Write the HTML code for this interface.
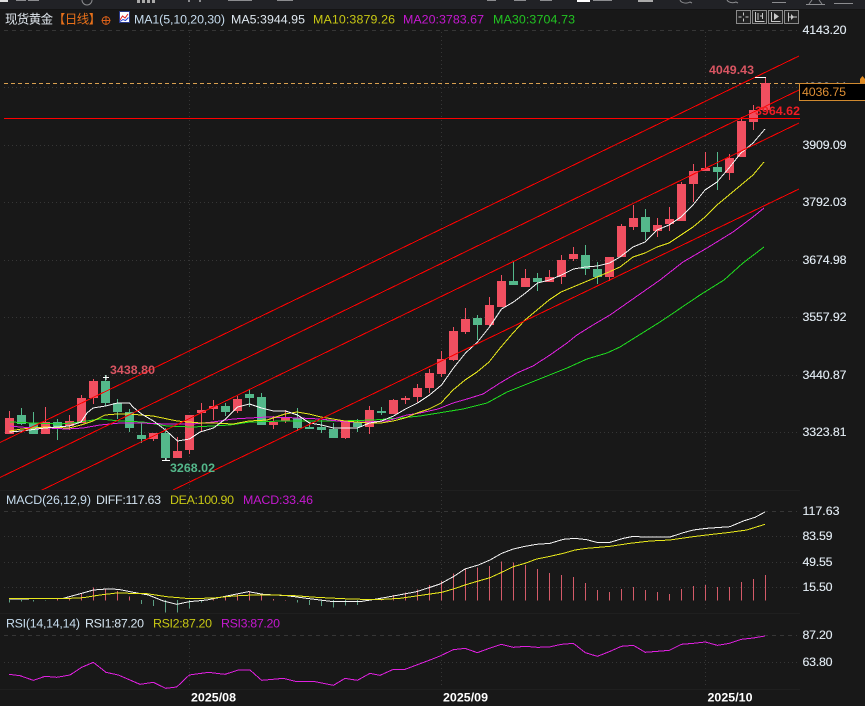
<!DOCTYPE html>
<html lang="zh">
<head>
<meta charset="utf-8">
<title>现货黄金</title>
<style>
html,body{margin:0;padding:0;background:#181818;overflow:hidden}
svg{display:block;position:absolute;left:0;top:0}
text{font-family:"Liberation Sans","Noto Sans CJK SC",sans-serif;font-size:12.4px;white-space:pre}
.l{fill:#e4edf5;stroke:#e4edf5;stroke-width:.12}
.b{font-weight:700;fill:#fff}
</style>
</head>
<body>
<svg width="865" height="706" viewBox="0 0 865 706" xmlns="http://www.w3.org/2000/svg">
<defs><clipPath id="c"><rect x="0" y="0" width="800" height="490"/></clipPath><clipPath id="t"><rect x="800" y="70" width="65" height="13"/></clipPath></defs>
<rect width="865" height="706" fill="#181818"/>
<!-- top band -->
<rect width="865" height="9" fill="#212226"/>
<rect y="9" width="865" height="1" fill="#141414"/>
<g fill="#8b8c8f">
<rect x="0" y="0" width="8" height="2" fill="#ddd"/><rect x="16" y="0" width="10" height="1"/><rect x="28" y="0" width="11" height="1"/>
<rect x="137" y="0" width="3" height="3" fill="#aaa"/><rect x="142" y="0" width="3" height="3" fill="#aaa"/><rect x="147" y="0" width="3" height="3" fill="#aaa"/><rect x="152" y="0" width="3" height="3" fill="#aaa"/>
<rect x="188" y="0" width="2" height="2"/><rect x="199" y="0" width="2" height="2"/>
<rect x="228" y="0" width="24" height="1"/><rect x="277" y="0" width="16" height="1"/>
<rect x="487" y="0" width="9" height="1"/><rect x="514" y="0" width="12" height="1"/><rect x="540" y="0" width="12" height="1"/>
<rect x="577" y="0" width="13" height="2" fill="#fff"/><rect x="593" y="0" width="19" height="1"/>
<rect x="638" y="0" width="15" height="2" fill="#aaa"/>
<rect x="772" y="2" width="14" height="1"/><rect x="834" y="3" width="19" height="1"/>
</g>
<g fill="none" stroke="#8b8c8f"><path d="M82 0a5 5 0 0 0 10 0"/><path d="M680 0a6 4 0 0 0 10 2l2 1"/><path d="M727 0a6 4 0 0 0 9 2l2 1"/><path d="M806 4.500h19M809 4 812 0M822 4 819 0"/></g>

<!-- grid -->
<g fill="none" stroke="#363636" stroke-width="1">
<path stroke-dasharray="4 4" d="M4 30.500H797M4 511.500H797M4 635.500H797"/>
<path stroke-dasharray="1 3" d="M4 87.500H797M4 145.500H797M4 202.500H797M4 260.500H797M4 317.500H797M4 375.500H797M4 432.500H797M4 536.500H797M4 562.500H797M4 587.500H797M4 662.500H797"/>
<path stroke-dasharray="1 3" d="M189.500 32V612M441.500 32V612M705.500 32V612M189.500 640V688M441.500 640V688M705.500 640V688"/>
</g>
<path d="M0 613.500H800M0 689.500H800M0 490.500H800" stroke="#1f1f1f" fill="none"/>
<path d="M4 83.500H800" stroke="#d9a050" stroke-dasharray="4 3" fill="none"/>

<!-- candles -->
<g shape-rendering="crispEdges">
<path fill="none" stroke="#f04f60" d="M9.500 411V434M45.500 407V434M69.500 415V430M81.500 395V423M93.500 379V404M153.500 433V441M177.500 437V458M189.500 415V454M201.500 403V432M213.500 400V420M237.500 396V413M273.500 416V429M285.500 410V423M345.500 422V439M369.500 406V434M393.500 399V414M405.500 396V404M417.500 384V402M429.500 369V393M441.500 351V377M453.500 327V361M465.500 308V334M489.500 297V326M501.500 275V307M525.500 269V287M549.500 270V282M561.500 255V284M573.500 247V261M609.500 257V281M621.500 224V257M633.500 205V230M657.500 218V237M669.500 207V231M681.500 182V221M693.500 164V202M705.500 152V171M729.500 154V180M741.500 117V157M753.500 105V130M765.500 77V110"/>
<path fill="#f04f60" d="M5 418h9V434h-9zM41 422h9V434h-9zM65 421h9V426h-9zM77 398h9V423h-9zM89 381h9V398h-9zM149 433h9V439h-9zM173 451h9V458h-9zM185 415h9V450h-9zM197 410h9V413h-9zM209 406h9V409h-9zM233 399h9V411h-9zM269 422h9V425h-9zM281 418h9V421h-9zM341 422h9V438h-9zM365 410h9V427h-9zM389 400h9V414h-9zM401 398h9V400h-9zM413 388h9V397h-9zM425 373h9V388h-9zM437 359h9V374h-9zM449 331h9V360h-9zM461 319h9V332h-9zM485 305h9V325h-9zM497 281h9V307h-9zM521 278h9V287h-9zM545 277h9V282h-9zM557 260h9V277h-9zM569 254h9V259h-9zM605 257h9V277h-9zM617 226h9V257h-9zM629 218h9V227h-9zM653 225h9V231h-9zM665 219h9V224h-9zM677 184h9V221h-9zM689 171h9V184h-9zM701 168h9V171h-9zM725 158h9V173h-9zM737 121h9V157h-9zM749 110h9V122h-9zM761 83h9V110h-9z"/>
<path fill="none" stroke="#54b88b" d="M21.500 408V425M33.500 412V434M57.500 419V440M105.500 375V406M117.500 399V419M129.500 409V432M141.500 423V443M165.500 428V460M225.500 403V416M249.500 390V407M261.500 393V425M297.500 408V431M309.500 423V429M321.500 420V433M333.500 423V438M357.500 419V432M381.500 407V415M477.500 315V340M513.500 262V285M537.500 273V291M585.500 245V275M597.500 262V284M645.500 209V240M717.500 152V190"/>
<path fill="#54b88b" d="M17 415h9V424h-9zM29 423h9V434h-9zM53 422h9V427h-9zM101 381h9V403h-9zM113 403h9V412h-9zM125 412h9V428h-9zM137 435h9V439h-9zM161 433h9V458h-9zM221 406h9V412h-9zM245 394h9V398h-9zM257 397h9V425h-9zM293 418h9V428h-9zM305 427h9V429h-9zM317 427h9V430h-9zM329 429h9V438h-9zM353 422h9V427h-9zM377 411h9V413h-9zM473 318h9V325h-9zM509 281h9V285h-9zM533 278h9V282h-9zM581 255h9V269h-9zM593 269h9V277h-9zM641 217h9V232h-9zM713 167h9V172h-9z"/>
</g>

<!-- moving averages -->
<g fill="none" stroke-width="1" shape-rendering="crispEdges">
<polyline stroke="#1fdc1f" points="10,422 33,423 60,424 80,422 100,419 120,421 143,422 167,426 193,427 230,425 250,422 283,421 313,421 340,421 373,420 400,418 420,416 463,409 487,403 507,392 527,384 547,376 567,368 587,359 607,353 620,347 660,322 700,295 724,280 743,263 764,247"/>
<polyline stroke="#e020e0" points="10,426 20,427 33,428 47,428 67,429 83,428 100,425 120,423 140,423 167,424 193,424 213,422 233,419 267,417 300,418 320,419 347,422 367,422 387,421 407,415 420,413 438,409 453,403 467,399 483,394 500,383 517,373 533,366 550,355 567,343 577,335 593,325 610,315 620,308 660,280 683,262 707,248 733,232 753,217 764,208"/>
<polyline stroke="#e8e81c" points="9.500,431 21.500,429 45,427 69,428 81,425 93,421 105,415 117,414 129,414 153,416 177,421 201,423 213,423 233,424 249,421 267,420 285,414 297,412 309,414 321,417 333,419 345,421 357,422 369,423 381,423 393,421 405,418 417,413 429,409 441,403 453,390 465,380 477,372 489,362 501,347 513,333 525,320 537,310 549,300 561,292 573,287 585,282 597,277 609,272 620,267 633,257 645,253 657,247 669,243 681,235 693,227 705,217 717,205 729,195 741,185 753,175 764,162"/>
<polyline stroke="#f4f4f4" points="9.500,432 21.500,431 45,428 57,427 69,426 81,422 87,413 93,408 105.500,406 117.500,403 129.500,403 133,407 141.500,414 153.500,421 165.500,430 177.500,441 189.500,439 200,432 213.500,428 225.500,419 237.500,407 249.500,404 261.500,408 273.500,411 285.500,411 297.500,415 309.500,423 321.500,425 333.500,428 345.500,428 357.500,428 369.500,423 381.500,421 393.500,416 405.500,409 417.500,403 429.500,395 441.500,385 453.500,368 465.500,353 477.500,342 489.500,327 501.500,309 513.500,302 525.500,293 537.500,283 549.500,280 561.500,275 573.500,269 585.500,267 597.500,266 609.500,263 620,257 633,247 645,242 657,230 669,225 681,217 693,205 705,190 717,182 729,168 741,153 753,143 765,129"/>
</g>

<!-- channels -->
<g clip-path="url(#c)" fill="none" stroke="#ff0000" stroke-width="1" shape-rendering="crispEdges">
<path d="M0 442.500L799 56M0 477.500L799 90M40 491L799 123M173 490L799 189"/>
<path d="M4 118.500H800"/>
</g>

<!-- extreme marks -->
<path d="M103 377.500h6M106 375v5M162 460.500h8M166 458v3M755 77.500h11" stroke="#fff" fill="none" shape-rendering="crispEdges"/>
<text x="110" y="374" textLength="45" fill="#d95562" font-weight="700" lengthAdjust="spacing">3438.80</text>
<text x="170" y="472" textLength="45" fill="#54b88b" font-weight="700" lengthAdjust="spacing">3268.02</text>
<text x="709" y="74" textLength="45" fill="#d95562" font-weight="700" lengthAdjust="spacing">4049.43</text>
<text x="755" y="115" textLength="45" fill="#f01c24" font-weight="700" lengthAdjust="spacing">3964.62</text>

<!-- header -->
<text x="5" y="23.500" fill="#dfe6ec" textLength="48" lengthAdjust="spacing">现货黄金</text>
<text x="53" y="23.500" fill="#e8711a" textLength="48" lengthAdjust="spacing">【日线】</text>
<g fill="none" stroke="#d9601a"><circle cx="106" cy="20.500" r="3.800"/><path d="M101.500 20.500h9M106 16v9"/></g>
<rect x="119.500" y="11.500" width="10" height="11" fill="#fff" stroke="#2a3a8a"/>
<path d="M120 20l2.500-4 2.500 2 3-4" stroke="#e02020" fill="none"/>
<path d="M120 21.500l3-2 2.500 1 3-3" stroke="#2040d0" fill="none"/>
<text x="134" y="23.500" style="fill:#c6dcee" textLength="91" lengthAdjust="spacing">MA1(5,10,20,30)</text>
<text x="231" y="23.500" style="fill:#dfe8f0" textLength="74" lengthAdjust="spacing">MA5:3944.95</text>
<text x="313" y="23.500" fill="#c8c814" textLength="82" lengthAdjust="spacing">MA10:3879.26</text>
<text x="403" y="23.500" fill="#c518d0" textLength="81" lengthAdjust="spacing">MA20:3783.67</text>
<text x="493" y="23.500" fill="#22c422" textLength="82" lengthAdjust="spacing">MA30:3704.73</text>

<!-- toolbar buttons -->
<g fill="#222" stroke="#8a8a8a" shape-rendering="crispEdges">
<rect x="736.500" y="10.500" width="14" height="13"/><rect x="752.500" y="10.500" width="14" height="13"/><rect x="768.500" y="10.500" width="14" height="13"/><rect x="784.500" y="10.500" width="14" height="13"/>
</g>
<g fill="none" stroke="#c8c8c8" shape-rendering="crispEdges">
<path d="M743.500 12.500v3M743.500 18.500v3M738.500 17h3M745.500 17h3"/>
<path d="M755.500 12v9.500h9M762.500 13v6M760 16h2M758 13v7"/>
<path d="M771.500 12v9.500h9"/>
<path d="M788.500 12.500v9M789 17h8"/>
</g>
<path d="M774 13l5 3.500-5 3.500z" fill="#c8c8c8"/>
<path d="M791 14v6l3-3z" fill="#c8c8c8"/>

<!-- main axis -->
<text class="l" x="802.500" y="34" textLength="44">4143.20</text>
<text class="l" x="802.500" y="149" textLength="44">3909.09</text>
<text class="l" x="802.500" y="206" textLength="44">3792.03</text>
<text class="l" x="802.500" y="264" textLength="44">3674.98</text>
<text class="l" x="802.500" y="321" textLength="44">3557.92</text>
<text class="l" x="802.500" y="379" textLength="44">3440.87</text>
<text class="l" x="802.500" y="436" textLength="44">3323.81</text>
<g clip-path="url(#t)"><text class="l" x="802.500" y="91" textLength="44">4026.44</text></g>
<path d="M862.500 76l2.500 3v4h-5v-4z" fill="#e08a20"/>
<rect x="799.500" y="83.500" width="66" height="17" fill="#000" stroke="#d08a30"/>
<text x="802" y="96" fill="#dd8f35" textLength="44">4036.75</text>

<!-- MACD -->
<g transform="translate(0,485) scale(.33333)" fill="none" stroke-width="3" shape-rendering="crispEdges">
<path stroke="#d45a68" d="M172.500 347V342M208.500 347V338M244.500 347V325M280.500 347V307M316.500 347V310M352.500 347V318M388.500 347V335M640.500 347V338M676.500 347V333M712.500 347V325M748.500 347V318M784.500 347V331M820.500 347V342M856.500 347V345M1144.500 347V342M1180.500 347V330M1216.500 347V322M1252.500 347V313M1288.500 347V300M1324.500 347V288M1360.500 347V265M1396.500 347V250M1432.500 347V248M1468.500 347V243M1504.500 347V230M1540.500 347V233M1576.500 347V240M1612.500 347V252M1648.500 347V264M1684.500 347V270M1720.500 347V276M1756.500 347V294M1792.500 347V315M1828.500 347V321M1864.500 347V312M1900.500 347V306M1936.500 347V315M1972.500 347V321M2008.500 347V327M2044.500 347V312M2080.500 347V303M2116.500 347V300M2152.500 347V306M2188.500 347V306M2224.500 347V291M2260.500 347V282M2296.500 347V270"/>
<path stroke="#5c9f84" d="M28.500 345V352M64.500 345V350M100.500 345V350M136.500 345V347M424.500 345V357M460.500 345V363M496.500 345V383M532.500 345V383M568.500 345V370M604.500 345V352M892.500 345V353M928.500 345V360M964.500 345V363M1000.500 345V368M1036.500 345V362M1072.500 345V360"/>
<polyline stroke="#f2f2f2" points="27,342 190,340 245,325 280,315 320,312 355,313 400,322 445,330 490,348 530,358 568,350 620,345 670,335 710,327 745,320 790,328 860,332 920,340 1000,350 1080,350 1130,342 1180,333 1250,320 1290,307"/>
<polyline stroke="#e8e81c" points="27,341 190,341 250,338 300,330 350,324 440,326 500,335 570,341 640,339 700,333 760,330 870,331 950,337 1050,342 1130,344 1200,340 1290,327"/>
<polyline stroke="#e020e0" points="27,568 60,572 100,586 135,574 170,577 210,570 245,547 280,532 318,562 355,570 420,598 460,592 497,610 530,606 568,570 625,562 675,568 715,555 750,555 785,586 850,580 890,590 945,590 1000,601 1035,580 1072,586 1110,565 1140,571 1180,553 1215,553 1290,525"/>
</g>
<g transform="translate(430,485) scale(.33333)" fill="none" stroke-width="3" shape-rendering="crispEdges">
<polyline stroke="#f2f2f2" points="0,307 30,297 70,275 105,252 145,240 180,225 215,205 250,192 285,184 320,178 360,175 400,163 435,160 470,164 500,172 540,172 580,160 610,154 640,156 720,156 760,143 790,135 830,130 900,125 940,108 975,97 1005,81"/>
<polyline stroke="#e8e81c" points="0,327 35,322 70,312 105,300 145,288 180,278 215,262 250,245 285,235 320,222 360,214 400,205 435,195 470,190 540,184 600,175 660,168 720,165 790,155 830,150 900,142 950,135 1005,118"/>
<polyline stroke="#e020e0" points="0,525 30,513 70,494 105,490 142,503 178,490 214,478 250,487 286,484 322,487 358,486 394,478 430,475 466,503 502,514 538,500 574,484 610,481 646,502 682,499 718,496 754,478 790,475 826,471 862,481 898,475 934,463 970,459 1005,453"/>
</g>

<text x="6" y="504" style="fill:#c6dcee" textLength="85" lengthAdjust="spacing">MACD(26,12,9)</text>
<text x="96" y="504" style="fill:#d5e4f0" textLength="65" lengthAdjust="spacing">DIFF:117.63</text>
<text x="170" y="504" fill="#c8c814" textLength="64" lengthAdjust="spacing">DEA:100.90</text>
<text x="243" y="504" fill="#c518d0" textLength="70" lengthAdjust="spacing">MACD:33.46</text>
<text x="6" y="627.500" style="fill:#c6dcee" textLength="74" lengthAdjust="spacing">RSI(14,14,14)</text>
<text x="85" y="627.500" style="fill:#d5e4f0" textLength="59" lengthAdjust="spacing">RSI1:87.20</text>
<text x="153" y="627.500" fill="#c8c814" textLength="59" lengthAdjust="spacing">RSI2:87.20</text>
<text x="221" y="627.500" fill="#c518d0" textLength="59" lengthAdjust="spacing">RSI3:87.20</text>

<text class="l" x="802.500" y="515" textLength="37">117.63</text>
<text class="l" x="802.500" y="540" textLength="30">83.59</text>
<text class="l" x="802.500" y="566" textLength="30">49.55</text>
<text class="l" x="802.500" y="591" textLength="30">15.50</text>
<text class="l" x="802.500" y="639" textLength="30">87.20</text>
<text class="l" x="802.500" y="666" textLength="30">63.80</text>

<text class="b" x="191" y="701.500" textLength="45" lengthAdjust="spacing">2025/08</text>
<text class="b" x="443" y="701.500" textLength="45" lengthAdjust="spacing">2025/09</text>
<text class="b" x="707.500" y="701.500" textLength="45" lengthAdjust="spacing">2025/10</text>
</svg>
</body>
</html>
